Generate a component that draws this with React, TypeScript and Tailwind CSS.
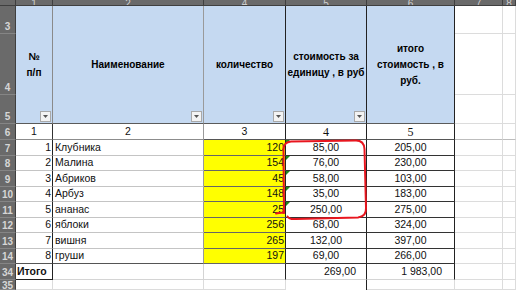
import React from "react";

// Excel-like sheet: fruit price list with a hand-drawn red mark over col D.

const colLabels = ["1", "2", "4", "5", "6", "7", "8"];

const rows: [number, string, number, string, string][] = [
  [1, "Клубника", 120, "85,00", "205,00"],
  [2, "Малина", 154, "76,00", "230,00"],
  [3, "Абриков", 45, "58,00", "103,00"],
  [4, "Арбуз", 148, "35,00", "183,00"],
  [5, "ананас", 25, "250,00", "275,00"],
  [6, "яблоки", 256, "68,00", "324,00"],
  [7, "вишня", 265, "132,00", "397,00"],
  [8, "груши", 197, "69,00", "266,00"],
];

function RowHead({ n, last }: { n: string; last?: boolean }) {
  return (
    <div
      className={`flex items-end justify-center overflow-hidden border-r border-b border-r-[#3f3f3f] border-b-[#858585] bg-[#6a6a6a] pb-[1px] text-[10px] font-bold leading-none text-[#d6d6d6] ${
        last ? "items-start pt-[1px]" : ""
      }`}
    >
      {n}
    </div>
  );
}

function Filter() {
  return (
    <div className="absolute right-[1px] bottom-[1px] flex h-[11px] w-[11px] items-center justify-center border border-[#a9a9a9] bg-[#f3f3f3]">
      <svg width="5" height="3" viewBox="0 0 5 3">
        <path d="M0 0h5L2.5 3z" fill="#555" />
      </svg>
    </div>
  );
}

function Head({
  children,
  border,
  filter = true,
}: {
  children: React.ReactNode;
  border: string;
  filter?: boolean;
}) {
  return (
    <div
      className={`relative row-span-3 flex items-center justify-center border-r border-b border-b-[#5a5a5a] bg-[#c5d9f1] text-center text-[10px] leading-[16px] font-bold text-black ${border}`}
    >
      <div>{children}</div>
      {filter && <Filter />}
    </div>
  );
}

function Green() {
  return (
    <svg className="absolute top-0 left-0" width="4" height="4" viewBox="0 0 4 4">
      <path d="M0 0h4L0 4z" fill="#1f8a1f" />
    </svg>
  );
}

export default function App() {
  const light = "border-r border-b border-[#dcdcdc]";

  return (
    <div className="relative h-[290px] w-[516px] overflow-hidden bg-white font-['Liberation_Sans',Arial,sans-serif] text-[10.5px] text-[#111]">
      <div className="grid h-full grid-cols-[16px_37px_151px_82px_81px_88px_48px_1fr] grid-rows-[6px_28px_61px_29px_16px_16px_15px_16px_15px_16px_15px_16px_15px_16px_1fr]">
        {/* column header strip */}
        <div className="border-r border-b border-[#3f3f3f] bg-[#6a6a6a]" />
        {colLabels.map((c) => (
          <div
            key={c}
            className="flex items-end justify-center overflow-hidden border-r border-b border-[#3f3f3f] bg-[#6a6a6a] text-[10px] leading-none text-[#cfcfcf]"
          >
            <span className="translate-y-[4px]">{c}</span>
          </div>
        ))}

        {/* header rows 3-5 */}
        <RowHead n="3" />
        <Head border="border-r-[#8a8a8a]">
          №
          <br />
          п/п
        </Head>
        <Head border="border-r-[#9a9a9a]">Наименование</Head>
        <Head border="border-r-[#222]">количество</Head>
        <Head border="border-r-[#222]">
          стоимость за
          <br />
          единицу , в руб
        </Head>
        <Head border="border-r-[#222]" filter={false}>
          итого
          <br />
          стоимость , в
          <br />
          руб.
        </Head>
        <div className={light} />
        <div className={light} />
        <RowHead n="4" />
        <div className={light} />
        <div className={light} />
        <RowHead n="5" />
        <div className={light} />
        <div className={light} />

        {/* row 6: column numbers */}
        <RowHead n="6" />
        <div className="flex items-center justify-center border-r border-b border-r-[#333] border-b-[#8c8c8c]">1</div>
        <div className="flex items-center justify-center border-r border-b border-r-[#9a9a9a] border-b-[#8c8c8c]">2</div>
        <div className="flex items-center justify-center border-r border-b border-r-[#222] border-b-[#555]">3</div>
        <div className="flex items-center justify-center border-r border-b border-r-[#222] border-b-[#555] font-['Liberation_Serif',serif] text-[12px]">
          4
        </div>
        <div className="flex items-center justify-center border-r border-b border-r-[#222] border-b-[#555] font-['Liberation_Serif',serif] text-[12px]">
          5
        </div>
        <div className="border-r border-b border-r-[#dcdcdc] border-b-[#bdbdbd]" />
        <div className="border-r border-b border-r-[#dcdcdc] border-b-[#bdbdbd]" />

        {/* data rows */}
        {rows.map(([n, name, qty, price, total], i) => {
          const last = i === rows.length - 1;
          const ab = last ? "border-b-[#555]" : "border-b-[#c4c4c4]";
          return (
            <React.Fragment key={n}>
              <RowHead n={String(7 + i)} />
              <div className={`flex items-center justify-end border-r border-b border-r-[#222] pr-[1px] ${ab}`}>{n}</div>
              <div className={`flex items-center border-r border-b border-r-[#9a9a9a] pl-[2px] ${ab}`}>{name}</div>
              <div className="flex items-center justify-end border-r border-b border-r-[#222] border-b-[#666] bg-[#ffff00] pr-[1px]">
                {qty}
              </div>
              <div className="relative flex items-center justify-center border-r border-b border-r-[#222] border-b-[#333]">
                {i < 5 && <Green />}
                {price}
              </div>
              <div className="flex items-center justify-center border-r border-b border-r-[#222] border-b-[#333]">{total}</div>
              <div className={light} />
              <div className={light} />
            </React.Fragment>
          );
        })}

        {/* row 34: totals */}
        <RowHead n="34" />
        <div className="flex items-center border-r border-b border-[#222] pl-[1px] font-bold">Итого</div>
        <div className="border-r border-b border-[#d4d4d4]" />
        <div className="border-r border-b border-r-[#222] border-b-[#d4d4d4]" />
        <div className="flex items-center justify-end border-r border-b border-r-[#222] border-b-[#d4d4d4] pr-[10px]">269,00</div>
        <div className="flex items-center justify-end border-r border-b border-r-[#222] border-b-[#d4d4d4] pr-[12px]">1 983,00</div>
        <div className={light} />
        <div className={light} />

        {/* row 35, cut off */}
        <RowHead n="35" last />
        <div className={light} />
        <div className={light} />
        <div className={light} />
        <div className="border-r border-r-[#222]" />
        <div className={light} />
        <div className={light} />
        <div className={light} />
      </div>

      {/* hand-drawn red mark */}
      <svg className="pointer-events-none absolute top-0 left-0" width="516" height="290" viewBox="0 0 516 290">
        <path
          d="M276 213.5 Q281 212.5 284 213 L283.5 150 Q283.5 142 291 141.5 L356 140.5 Q364 140.5 364.5 149 L366 208 Q366.5 216.5 358 217.5 L296 219 Q289 219.5 287.5 216.5"
          fill="none"
          stroke="#e8161f"
          strokeWidth="2"
          strokeLinecap="round"
          strokeLinejoin="round"
        />
      </svg>
    </div>
  );
}
